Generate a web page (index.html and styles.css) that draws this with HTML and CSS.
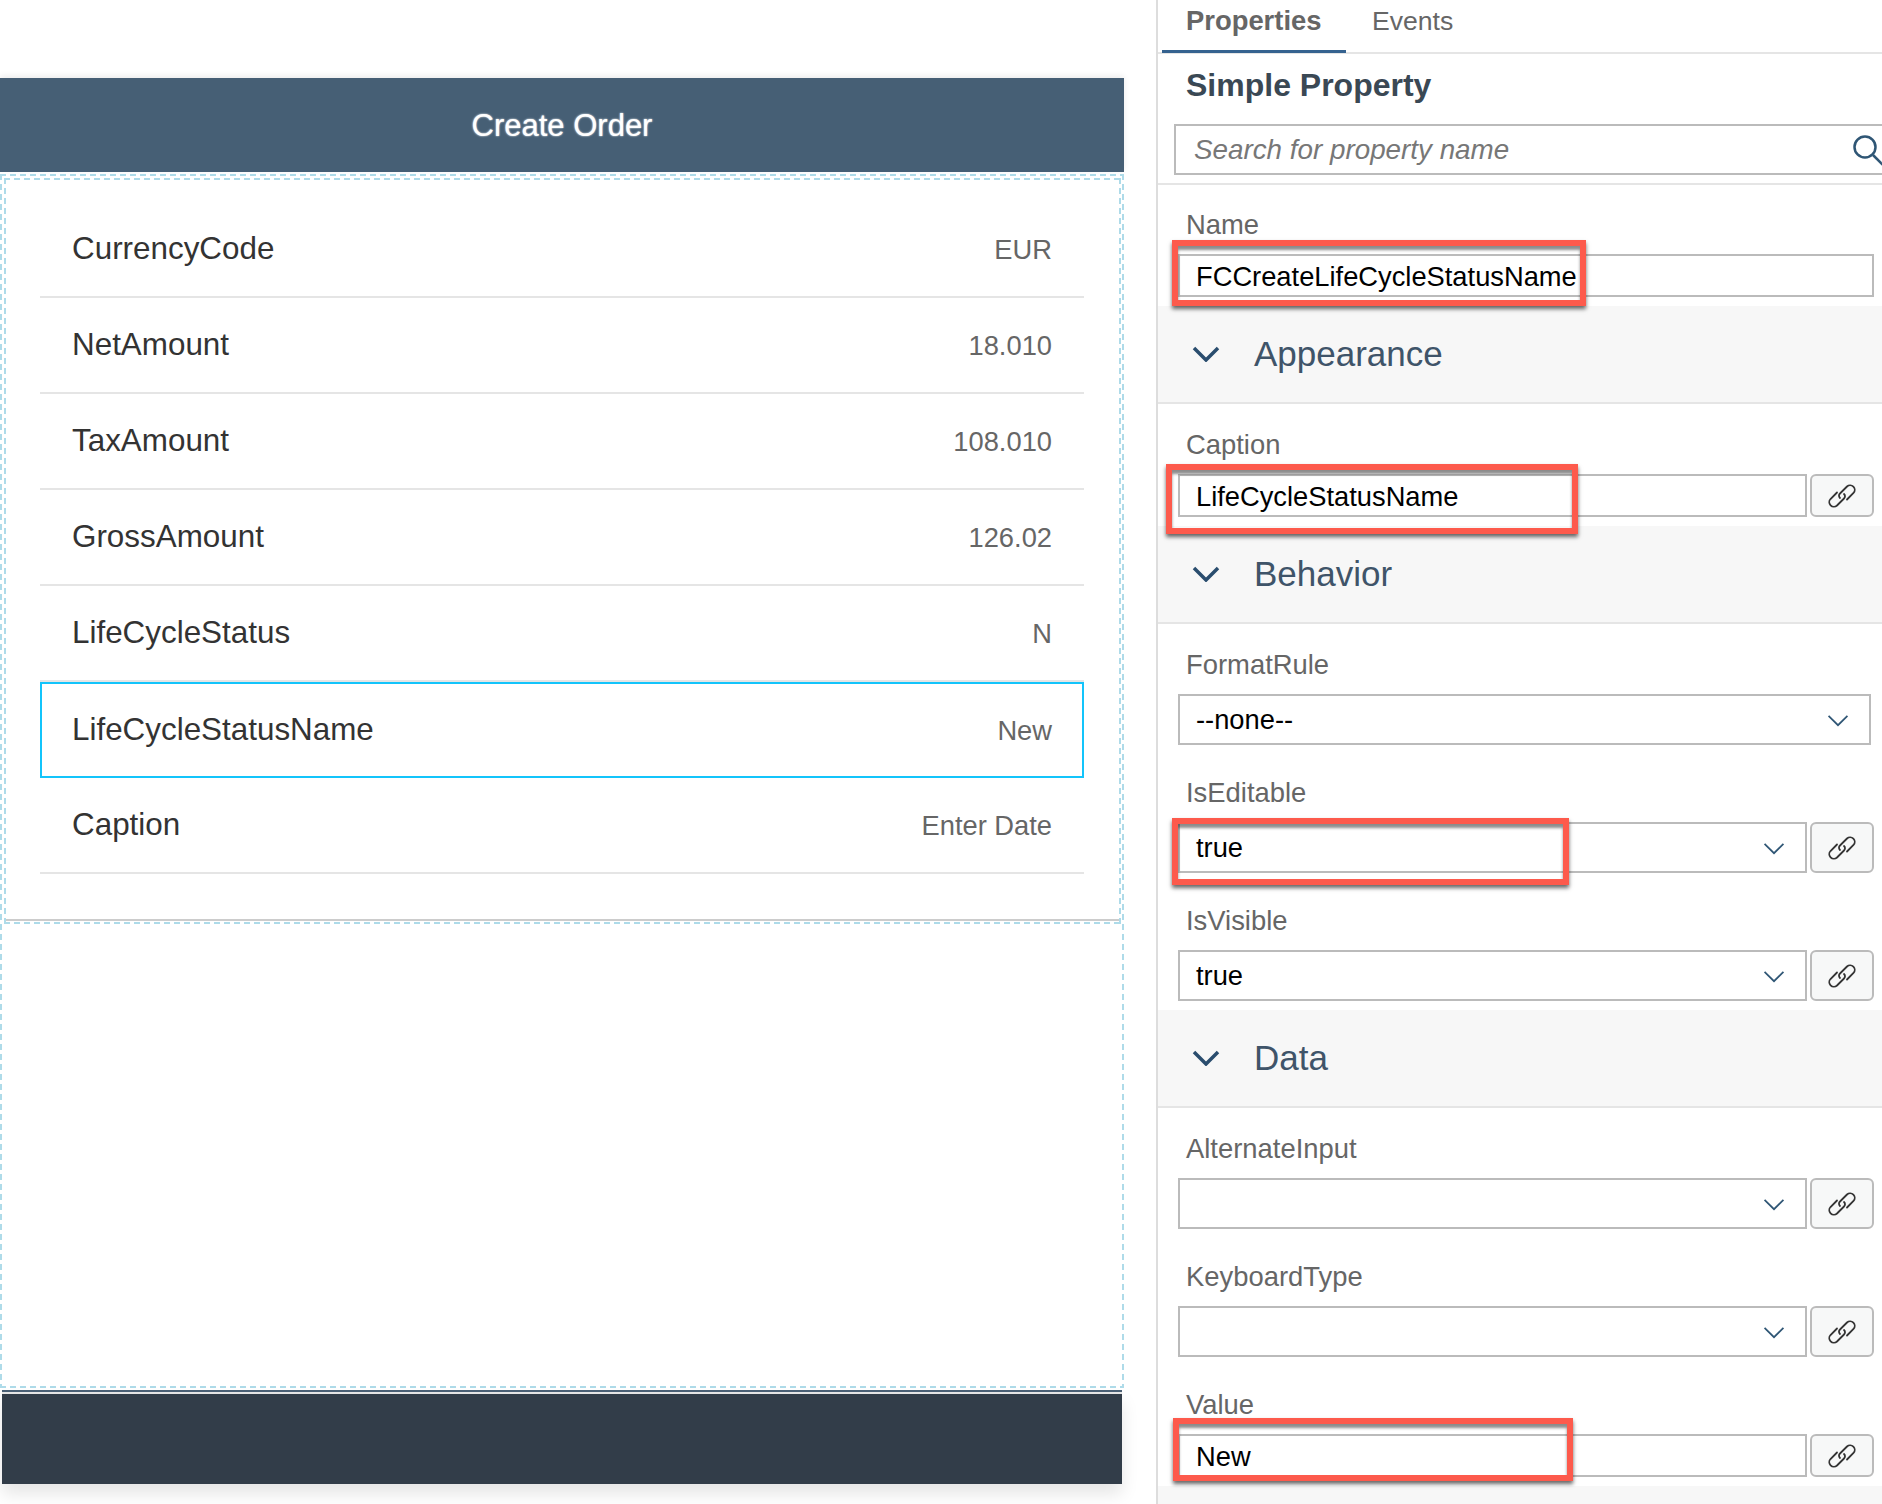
FILE: index.html
```html
<!DOCTYPE html>
<html lang="en">
<head>
<meta charset="UTF-8">
<title>Create Order - Properties</title>
<link rel="stylesheet" href="styles.css">
</head>
<body>
<svg class="defs" width="0" height="0">
    <symbol id="link" viewBox="0 0 28 28">
        <path d="M12 16a3 3 0 0 1 0-4.5L19 4.5a4.6 4.6 0 0 1 6.5 6.5L19 17.5"/>
        <path d="M16 12a3 3 0 0 1 0 4.5L9 23.5a4.6 4.6 0 0 1-6.5-6.5L9 10.5"/>
    </symbol>
    <symbol id="chev" viewBox="0 0 28 16">
        <path d="M2 2l12 12L26 2"/>
    </symbol>
</svg>

<div class="canvas">
    <div class="page-head">Create Order</div>
    <div class="page-body dashed">
        <div class="list dashed">
            <div class="row"><span class="row-name">CurrencyCode</span><span class="row-value">EUR</span></div>
            <div class="row"><span class="row-name">NetAmount</span><span class="row-value">18.010</span></div>
            <div class="row"><span class="row-name">TaxAmount</span><span class="row-value">108.010</span></div>
            <div class="row"><span class="row-name">GrossAmount</span><span class="row-value">126.02</span></div>
            <div class="row"><span class="row-name">LifeCycleStatus</span><span class="row-value">N</span></div>
            <div class="row selected"><span class="row-name">LifeCycleStatusName</span><span class="row-value">New</span></div>
            <div class="row"><span class="row-name">Caption</span><span class="row-value">Enter Date</span></div>
            <div class="list-end"></div>
        </div>
    </div>
    <div class="page-foot"></div>
</div>

<div class="panel">
    <div class="tabs">
        <div class="tab active">Properties</div>
        <div class="tab">Events</div>
    </div>
    <div class="panel-title">Simple Property</div>
    <div class="search-wrap">
        <div class="search">
            <span>Search for property name</span>
            <svg class="search-icon" viewBox="0 0 32 32"><circle cx="13" cy="13" r="10.5"/><path d="M21 21l10 10"/></svg>
        </div>
    </div>

    <div class="group first">
        <div class="field">
            <div class="label">Name</div>
            <div class="inputs">
                <div class="input short">FCCreateLifeCycleStatusName</div>
                <div class="mark mark-name"></div>
            </div>
        </div>
    </div>

    <div class="section">
        <svg class="section-chev"><use href="#chev"/></svg>
        <span>Appearance</span>
    </div>
    <div class="group">
        <div class="field">
            <div class="label">Caption</div>
            <div class="inputs">
                <div class="input short">LifeCycleStatusName</div>
                <div class="bind"><svg><use href="#link"/></svg></div>
                <div class="mark mark-caption"></div>
            </div>
        </div>
    </div>

    <div class="section">
        <svg class="section-chev"><use href="#chev"/></svg>
        <span>Behavior</span>
    </div>
    <div class="group">
        <div class="field">
            <div class="label">FormatRule</div>
            <div class="inputs narrow">
                <div class="input">--none--<svg class="drop"><use href="#chev"/></svg></div>
            </div>
        </div>
        <div class="field">
            <div class="label">IsEditable</div>
            <div class="inputs">
                <div class="input">true<svg class="drop"><use href="#chev"/></svg></div>
                <div class="bind"><svg><use href="#link"/></svg></div>
                <div class="mark mark-editable"></div>
            </div>
        </div>
        <div class="field">
            <div class="label">IsVisible</div>
            <div class="inputs">
                <div class="input">true<svg class="drop"><use href="#chev"/></svg></div>
                <div class="bind"><svg><use href="#link"/></svg></div>
            </div>
        </div>
    </div>

    <div class="section">
        <svg class="section-chev"><use href="#chev"/></svg>
        <span>Data</span>
    </div>
    <div class="group">
        <div class="field">
            <div class="label">AlternateInput</div>
            <div class="inputs">
                <div class="input"><svg class="drop"><use href="#chev"/></svg></div>
                <div class="bind"><svg><use href="#link"/></svg></div>
            </div>
        </div>
        <div class="field">
            <div class="label">KeyboardType</div>
            <div class="inputs">
                <div class="input"><svg class="drop"><use href="#chev"/></svg></div>
                <div class="bind"><svg><use href="#link"/></svg></div>
            </div>
        </div>
        <div class="field">
            <div class="label">Value</div>
            <div class="inputs">
                <div class="input short">New</div>
                <div class="bind"><svg><use href="#link"/></svg></div>
                <div class="mark mark-value"></div>
            </div>
        </div>
    </div>
    <div class="panel-end"></div>
</div>
</body>
</html>
```

FILE: styles.css
```css
html, body {
    margin: 0;
    height: 100%;
    overflow: hidden;
}
body {
    display: flex;
    height: 1504px;
    background-color: #fff;
    font-family: "Liberation Sans", Arial, sans-serif;
}
.defs {
    position: absolute;
}

/* left side */
.canvas {
    width: 1124px;
    padding-top: 78px;
    flex: none;
    box-sizing: border-box;
    display: flex;
    flex-direction: column;
}
.page-head {
    height: 94px;
    line-height: 96px;
    background-color: #465f75;
    color: #fff;
    text-align: center;
    font-size: 31px;
    text-shadow: 0 0 2px #fff;
    box-shadow: 0 -2px 6px rgba(0, 0, 0, .08);
}
/* longer dashes than the browser's own dashed border */
.dashed {
    background-image:
        linear-gradient(90deg, #aedbe9 6px, transparent 6px),
        linear-gradient(90deg, #aedbe9 6px, transparent 6px),
        linear-gradient(#aedbe9 6px, transparent 6px),
        linear-gradient(#aedbe9 6px, transparent 6px);
    background-size: 10px 2px, 10px 2px, 2px 10px, 2px 10px;
    background-position: 0 0, 0 100%, 0 0, 100% 0;
    background-repeat: repeat-x, repeat-x, repeat-y, repeat-y;
}
.page-body {
    flex: 1;
    margin-top: 2px;
    padding: 4px 3px 2px 4px;
}
.list {
    display: flex;
    flex-direction: column;
    height: 746px;
    box-sizing: border-box;
    padding: 24px 37px 0 36px;
}
.list-end {
    margin: auto -35px 3px -34px;
    border-bottom: 2px solid #ccc;
}
.row {
    display: flex;
    justify-content: space-between;
    align-items: center;
    height: 96px;
    box-sizing: border-box;
    padding: 0 32px;
    border-bottom: 2px solid #e5e5e5;
}
.row.selected {
    padding: 0 30px;
    border: 2px solid #13c4fb;
}
.row-name {
    font-size: 31.4px;
    color: #333;
}
.row-value {
    padding-top: 2px;
    font-size: 27.3px;
    color: #666;
}
.page-foot {
    height: 90px;
    margin: 4px 2px 20px;
    border-top: 2px solid #e5e5e5;
    background-color: #323d49;
    background-clip: content-box;
    box-shadow: 0 -2px 0 #4a6075, 0 10px 16px rgba(0, 0, 0, .1);
}

/* right side */
.panel {
    flex: 1;
    min-width: 0;
    margin-left: 32px;
    border-left: 2px solid #ddd;
    display: flex;
    flex-direction: column;
    overflow: hidden;
}
.tabs {
    display: flex;
    height: 54px;
    box-sizing: border-box;
    border-bottom: 2px solid #e5e5e5;
}
.tab {
    height: 52px;
    line-height: 42px;
    font-size: 26.6px;
    color: #666;
    margin-left: 26px;
}
.tab.active {
    box-sizing: border-box;
    width: 184px;
    height: 53px;
    margin-left: 4px;
    padding-left: 24px;
    font-size: 27.4px;
    font-weight: 700;
    border-bottom: 3px solid #35628f;
}
.panel-title {
    height: 62px;
    line-height: 62px;
    margin-bottom: 8px;
    padding-left: 28px;
    font-size: 32px;
    font-weight: 700;
    color: #3a4854;
}
.search-wrap {
    padding: 0 0 8px 16px;
    border-bottom: 2px solid #e5e5e5;
}
.search {
    display: flex;
    align-items: center;
    justify-content: space-between;
    width: 730px;
    height: 51px;
    box-sizing: border-box;
    padding: 0 0 0 18px;
    border: 2px solid #bbb;
    font-size: 27.8px;
    font-style: italic;
    color: #777;
}
.search-icon {
    width: 32px;
    height: 32px;
    margin-right: 18px;
    fill: none;
    stroke: #2f5675;
    stroke-width: 2.5;
}
.group {
    padding: 25px 8px 9px 20px;
}
.group.first {
    padding-top: 24px;
}
.field + .field {
    margin-top: 32px;
}
.label {
    height: 30px;
    line-height: 32px;
    margin-bottom: 15px;
    padding-left: 8px;
    font-size: 27.4px;
    color: #666;
}
.inputs {
    position: relative;
    display: flex;
    gap: 3px;
}
.inputs.narrow {
    margin-right: 3px;
}
.input {
    flex: 1;
    position: relative;
    display: flex;
    align-items: center;
    height: 51px;
    box-sizing: border-box;
    padding-left: 16px;
    border: 2px solid #bbb;
    font-size: 27.3px;
    color: #000;
}
.input.short {
    height: 43px;
    padding-top: 2px;
}
.drop {
    position: absolute;
    right: 20px;
    top: 18px;
    width: 22px;
    height: 13px;
    fill: none;
    stroke: #2f5675;
    stroke-width: 2.2;
}
.bind {
    width: 64px;
    flex: none;
    box-sizing: border-box;
    display: flex;
    align-items: center;
    justify-content: center;
    border: 2px solid #bbb;
    border-radius: 6px;
    background-color: #f7f8f8;
}
.bind svg {
    width: 28px;
    height: 28px;
    fill: none;
    stroke: #333;
    stroke-width: 1.8;
    stroke-linecap: round;
}

/* red annotation boxes drawn over the form */
.mark {
    position: absolute;
    box-sizing: border-box;
    border: 6px solid #fd5a4c;
    box-shadow: 0 3px 4px rgba(0, 0, 0, .6), inset 0 4px 3px rgba(0, 0, 0, .45);
}
.mark-name {
    left: -6px;
    top: -14px;
    width: 414px;
    height: 66px;
}
.mark-caption {
    left: -12px;
    top: -10px;
    width: 412px;
    height: 70px;
}
.mark-editable {
    left: -6px;
    top: -4px;
    width: 397px;
    height: 67px;
}
.mark-value {
    left: -5px;
    top: -16px;
    width: 400px;
    height: 63px;
}

.section {
    display: flex;
    align-items: center;
    gap: 34px;
    height: 96px;
    padding-left: 34px;
    background-color: #f7f7f7;
    border-bottom: 2px solid #e5e5e5;
    font-size: 35px;
    color: #3f5469;
}
.section-chev {
    width: 28px;
    height: 16px;
    fill: none;
    stroke: #2a4d6e;
    stroke-width: 3.5;
}
.panel-end {
    flex: 1;
    background-color: #f7f7f7;
}
```
